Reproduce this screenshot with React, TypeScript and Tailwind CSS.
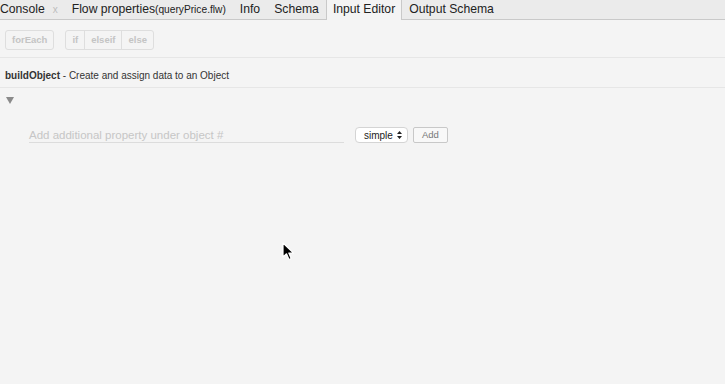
const tabs = [
  { label: 'Info' },
  { label: 'Schema' },
  { label: 'Input Editor', active: true },
  { label: 'Output Schema' },
];

export default function App() {
  return (
    <div
      className="relative w-[725px] h-[384px] overflow-hidden bg-[#f4f4f4] text-[#222]"
      style={{ fontFamily: '"Liberation Sans", Arial, sans-serif' }}
    >
      {/* Tab bar */}
      <div className="flex items-end h-[20px] bg-[#ebebeb] border-b border-[#c9c9c9] text-[12.2px] leading-[19px]">
        <div className="flex items-center pr-[7px]">
          <span>Console</span>
          <span className="ml-[8px] text-[10px] text-[#bdbdbd]">x</span>
        </div>
        <div className="px-[7px]">
          Flow properties<span className="text-[10.2px]">(queryPrice.flw)</span>
        </div>
        {tabs.map(t => (
          <div
            key={t.label}
            className={
              t.active
                ? 'pl-[6px] pr-[6px] bg-[#f4f4f4] border-x border-[#c9c9c9] h-[20px] -mb-px'
                : 'px-[7px]'
            }
          >
            {t.label}
          </div>
        ))}
      </div>

      {/* Toolbar */}
      <div className="flex items-center gap-[11px] px-[5px] pt-[10px] pb-[7px] border-b border-[#e6e6e6]">
        <button className="h-[20px] px-[6px] rounded-[3px] border border-[#dedede] text-[9.5px] font-bold text-[#c4c4c4]">
          forEach
        </button>
        <div className="flex h-[20px] rounded-[3px] border border-[#dedede] text-[9.5px] font-bold text-[#c4c4c4]">
          <span className="px-[6px] leading-[18px]">if</span>
          <span className="px-[6px] leading-[18px] border-l border-[#dedede]">elseif</span>
          <span className="px-[6px] leading-[18px] border-l border-[#dedede]">else</span>
        </div>
      </div>

      {/* Description */}
      <div className="px-[5px] h-[30px] pt-[12px] border-b border-[#e6e6e6] text-[10px] leading-[12px] text-[#333]">
        <span className="font-bold">buildObject</span>
        <span>&nbsp;- Create and assign data to an Object</span>
      </div>

      {/* Tree toggle */}
      <div className="px-[6px] pt-[9px]">
        <svg width="8" height="7" viewBox="0 0 8 7">
          <path d="M0 0 L8 0 L4 7 Z" fill="#8a8a8a" />
        </svg>
      </div>

      {/* Add property row */}
      <div className="flex items-center mt-[23px] pl-[29px]">
        <div className="w-[315px] border-b border-[#dcdcdc] h-[15px] text-[11.5px] text-[#c6c6c6] leading-[14px]">
          Add additional property under object #
        </div>
        <div className="ml-[11px] flex items-center h-[16px] pl-[8px] pr-[5px] rounded-[4px] border border-[#d4d4d4] bg-white text-[10px] text-[#222]">
          simple
          <svg className="ml-[4px]" width="5" height="8" viewBox="0 0 5 8">
            <path d="M0 3 L2.5 0 L5 3 Z M0 5 L2.5 8 L5 5 Z" fill="#222" />
          </svg>
        </div>
        <button className="ml-[5px] h-[16px] w-[35px] rounded-[2px] border border-[#c8c8c8] bg-[#f8f8f8] text-[9.5px] text-[#777]">
          Add
        </button>
      </div>

      {/* Mouse cursor */}
      <svg className="absolute left-[282px] top-[242px]" width="13" height="20" viewBox="0 0 13 20">
        <path d="M1 1 L1 15 L4.5 11.8 L7 17.5 L9.2 16.5 L6.8 11 L11.5 11 Z" fill="#000" stroke="#fff" strokeWidth="1.2" strokeLinejoin="round" />
      </svg>
    </div>
  );
}
